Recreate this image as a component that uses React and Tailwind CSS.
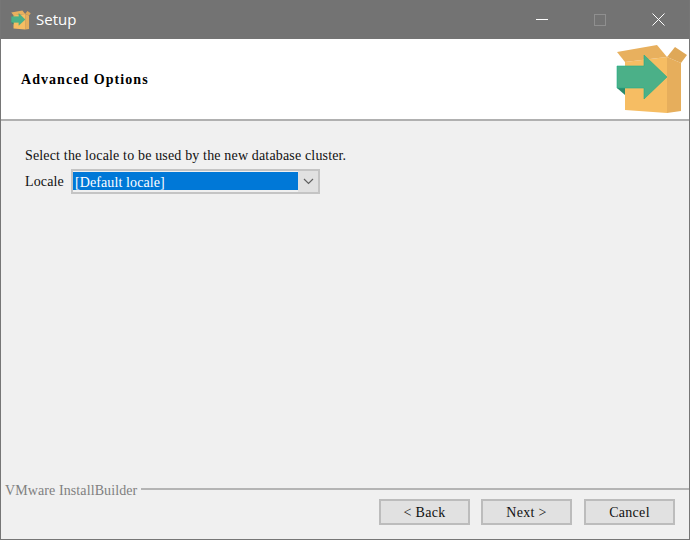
import React from 'react';

const BoxLogo = ({ className }) => (
  <svg className={className} viewBox="616 44 72 70">
    <polygon points="625,62 667,57 667,113 625,110" fill="#f6bd63" />
    <polygon points="667,57 681,63 681,111 667,113" fill="#e6ae5c" />
    <polygon points="617,52 657,45 667,57 625,62" fill="#e8b05e" />
    <polygon points="667,57 675,47 687,55 681,63" fill="#dfa858" />
    <polygon points="617,88 625,95 625,88" fill="#2c8a6a" />
    <polygon points="617,66 644,66 644,55 667,77 644,99 644,88 617,88" fill="#4bb088" stroke="#1fae8a" strokeWidth="0.6" />
  </svg>
);

const WizardButton = ({ children }) => (
  <button className="w-[91px] h-[26px] bg-[#e1e1e1] border-2 border-[#bcbcbc] text-[14px] tracking-[0.3px] text-[#111111] last:ml-px">
    {children}
  </button>
);

const App = () => {
  return (
    <div className="w-[690px] h-[540px] flex flex-col bg-[#f0f0f0] border-x border-b border-[#767676] font-['Liberation_Serif',serif] overflow-hidden">
      {/* title bar */}
      <div className="h-[39px] -mx-px flex items-center bg-[#737373] shrink-0">
        <BoxLogo className="w-5 h-5 ml-[11px]" />
        <span className="ml-[5px] text-[15px] text-white font-['Open_Sans',sans-serif]">Setup</span>
        <div className="ml-auto flex items-center">
          <div className="w-[46px] flex justify-center">
            <div className="w-3 h-px bg-white" />
          </div>
          <div className="w-[46px] ml-[12px] flex justify-center">
            <div className="w-3 h-3 border border-[#8f8f8f]" />
          </div>
          <div className="w-[46px] ml-[12px] flex justify-center mr-[9px]">
            <svg className="w-[13px] h-[13px]" viewBox="0 0 13 13" stroke="#fff" strokeWidth="1">
              <path d="M0.5 0.5 L12.5 12.5 M12.5 0.5 L0.5 12.5" />
            </svg>
          </div>
        </div>
      </div>

      {/* header */}
      <div className="h-[80px] flex items-center justify-between bg-white shrink-0">
        <h1 className="ml-5 text-[14px] font-bold tracking-[1.05px] text-black">Advanced Options</h1>
        <BoxLogo className="w-[72px] h-[70px] mr-[1px]" />
      </div>
      <div className="h-[2px] bg-[#b0b0b0] shrink-0" />

      {/* content */}
      <div className="flex-1 pl-6 pt-[26px]">
        <p className="text-[14px] leading-[18px] tracking-[0.16px] text-[#111111]">Select the locale to be used by the new database cluster.</p>
        <div className="flex items-center mt-[4px]">
          <span className="w-[46px] text-[14px] tracking-[0.15px] text-[#111111]">Locale</span>
          <div className="w-[249px] h-[25px] flex pt-[3px] pb-[2px] px-[2px] border-2 border-[#c4c4c4]">
            <div className="flex-1 -m-[2px] mb-0 mr-0 bg-[#0078d7] pl-[2px] text-[14px] leading-[21px] tracking-[0.1px] text-white">[Default locale]</div>
            <div className="w-[20px] -mt-[3px] -mb-[2px] -mr-[2px] flex items-center justify-center bg-[#e1e1e1]">
              <svg className="w-[11px] h-[7px]" viewBox="0 0 11 7" fill="none" stroke="#606060" strokeWidth="1.2">
                <path d="M1 1 L5.5 5.5 L10 1" />
              </svg>
            </div>
          </div>
        </div>
      </div>

      {/* footer */}
      <div className="h-[52px] shrink-0">
        <div className="flex items-center h-[4px] pl-1">
          <span className="pt-[2px] text-[14px] tracking-[0.1px] text-[#808080] bg-[#f0f0f0] pr-1">VMware InstallBuilder</span>
          <div className="flex-1 h-[2px] -mt-px bg-[#b4b4b4]" />
        </div>
        <div className="flex justify-end gap-[11px] mt-[8px] pr-[14px]">
          <WizardButton>&lt; Back</WizardButton>
          <WizardButton>Next &gt;</WizardButton>
          <WizardButton>Cancel</WizardButton>
        </div>
      </div>
    </div>
  );
};

export default App;
